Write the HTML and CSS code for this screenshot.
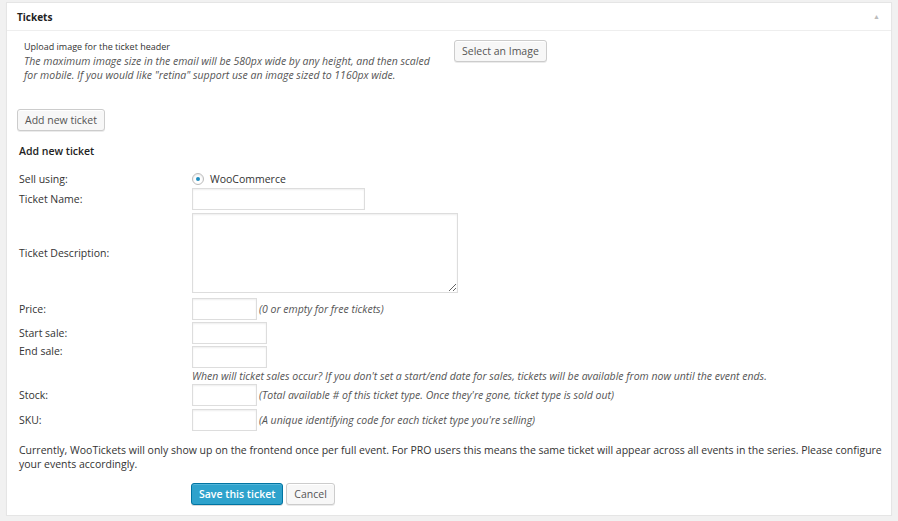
FILE: index.html
```html
<!DOCTYPE html>
<html lang="en">
<head>
    <meta charset="UTF-8">
    <title>Tickets</title>
    <link rel="stylesheet" href="styles.css">
</head>
<body>
    <div class="postbox">
        <div class="postbox-head">
            <h3>Tickets</h3>
            <span class="toggle">&#9650;</span>
        </div>
        <div class="inside">
            <div class="header-image">
                <div class="header-image-text">
                    <div class="upload-label">Upload image for the ticket header</div>
                    <p class="description">The maximum image size in the email will be 580px wide by any height, and then scaled for mobile. If you would like "retina" support use an image sized to 1160px wide.</p>
                </div>
                <button class="button">Select an Image</button>
            </div>

            <button class="button add-ticket">Add new ticket</button>

            <h4>Add new ticket</h4>

            <div class="ticket-form">
                <label>Sell using:</label>
                <div class="radio-field"><span class="radio"></span> WooCommerce</div>

                <label>Ticket Name:</label>
                <div><input type="text" class="input-name"></div>

                <label>Ticket Description:</label>
                <div><textarea class="input-desc"></textarea></div>

                <label>Price:</label>
                <div class="field-hint"><input type="text" class="input-small"> <em>(0 or empty for free tickets)</em></div>

                <label>Start sale:</label>
                <div><input type="text" class="input-date"></div>

                <label class="label-top">End sale:</label>
                <div><input type="text" class="input-date"></div>

                <div></div>
                <div class="sale-hint"><em>When will ticket sales occur? If you don't set a start/end date for sales, tickets will be available from now until the event ends.</em></div>

                <label>Stock:</label>
                <div class="field-hint"><input type="text" class="input-small"> <em>(Total available # of this ticket type. Once they're gone, ticket type is sold out)</em></div>

                <label>SKU:</label>
                <div class="field-hint"><input type="text" class="input-small"> <em>(A unique identifying code for each ticket type you're selling)</em></div>
            </div>

            <p class="notice">Currently, WooTickets will only show up on the frontend once per full event. For PRO users this means the same ticket will appear across all events in the series. Please configure your events accordingly.</p>

            <div class="actions">
                <button class="button button-primary">Save this ticket</button>
                <button class="button">Cancel</button>
            </div>
        </div>
    </div>
</body>
</html>
```

FILE: styles.css
```css
body {
    margin: 0;
    padding: 2px 6px 0;
    background-color: #f1f1f1;
    font-family: "Open Sans", sans-serif;
    font-size: 10.5px;
    color: #444;
}
.postbox {
    background-color: #fff;
    border: 1px solid #e5e5e5;
    box-shadow: 0 1px 1px rgba(0, 0, 0, 0.04);
    height: 514px;
    box-sizing: border-box;
}
.postbox-head {
    display: flex;
    justify-content: space-between;
    align-items: center;
    height: 27px;
    padding: 0 11px 0 10px;
    border-bottom: 1px solid #eee;
}
.postbox-head h3 {
    margin: 0;
    font-size: 10px;
    font-weight: 700;
    color: #222;
}
.toggle {
    font-size: 7px;
    color: #bbb;
}
.inside {
    padding: 0 4px 0 10px;
}
.header-image {
    display: flex;
    align-items: flex-start;
    padding: 9px 0 0 7px;
}
.header-image-text {
    width: 415px;
}
.upload-label {
    font-size: 9px;
    color: #333;
    line-height: 14px;
}
.description {
    margin: 0;
    font-style: italic;
    line-height: 14px;
    color: #555;
}
.header-image .button {
    margin-left: 15px;
}
.button {
    font-family: "Open Sans", sans-serif;
    font-size: 10.5px;
    color: #555;
    background-color: #f7f7f7;
    border: 1px solid #ccc;
    border-radius: 3px;
    box-shadow: inset 0 1px 0 #fff, 0 1px 0 rgba(0, 0, 0, 0.08);
    height: 22px;
    padding: 0 7px;
    cursor: pointer;
}
.add-ticket {
    margin-top: 27px;
}
h4 {
    margin: 12px 0 0 2px;
    font-size: 10.5px;
    font-weight: 600;
    color: #222;
    line-height: 16px;
}
.ticket-form {
    display: grid;
    grid-template-columns: 173px 1fr;
    grid-template-rows: 16px 23px 86px 25px 23px 25px 13px 26px 24px;
    margin: 12px 0 0 2px;
    align-items: center;
}
.ticket-form label {
    color: #333;
}
.ticket-form .label-top {
    align-self: start;
}
.radio-field {
    display: flex;
    align-items: center;
    gap: 6px;
    color: #333;
}
.radio {
    width: 10px;
    height: 10px;
    border: 1px solid #bbb;
    border-radius: 50%;
    box-shadow: inset 0 1px 2px rgba(0, 0, 0, 0.1);
    position: relative;
}
.radio::after {
    content: "";
    position: absolute;
    left: 3px;
    top: 3px;
    width: 4px;
    height: 4px;
    border-radius: 50%;
    background-color: #1e8cbe;
}
input, textarea {
    display: block;
    border: 1px solid #ddd;
    box-shadow: inset 0 1px 2px rgba(0, 0, 0, 0.07);
    box-sizing: border-box;
    height: 22px;
    margin: 0;
    font-family: "Open Sans", sans-serif;
}
.input-name {
    width: 173px;
}
.input-desc {
    width: 266px;
    height: 80px;
    resize: both;
}
.input-small {
    width: 65px;
}
.input-date {
    width: 75px;
}
.field-hint {
    display: flex;
    align-items: center;
    gap: 2px;
}
em {
    color: #555;
}
.notice {
    margin: 11px 0 0 2px;
    line-height: 14px;
    color: #333;
}
.actions {
    display: flex;
    gap: 3px;
    margin: 12px 0 0 174px;
}
.button-primary {
    background-color: #2ea2cc;
    border-color: #0074a2;
    color: #fff;
    font-weight: 600;
    box-shadow: inset 0 1px 0 rgba(120, 200, 230, 0.5), 0 1px 0 rgba(0, 0, 0, 0.15);
}
```
